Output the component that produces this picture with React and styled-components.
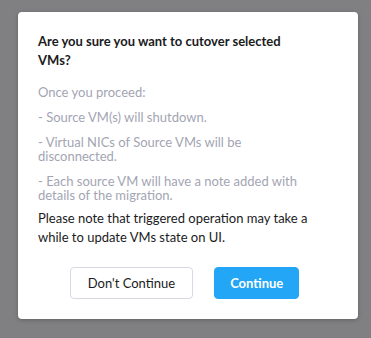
import React from "react";
import styled, { createGlobalStyle } from "styled-components";

const GlobalStyle = createGlobalStyle`
*{
  box-sizing: border-box;
  margin: 0;
  padding: 0;
}
body{
  background-color: #808083;
  font-family: Lato, "Open Sans", sans-serif;
}
`

const Overlay = styled.div`
width: 371px;
height: 338px;
padding: 12px 13px 0 18px;
`

const Modal = styled.section`
width: 340px;
background-color: #ffffff;
border-radius: 4px;
box-shadow: 0 1px 4px rgba(0, 0, 0, 0.25);
padding: 20px 20px 20px 20px;
`

const Title = styled.h2`
font-size: 13px;
font-weight: 700;
line-height: 19px;
color: #1b1b22;
`

const Notes = styled.div`
margin-top: 15px;
display: flex;
flex-direction: column;
gap: 11px;
`

const Note = styled.p`
font-size: 13px;
line-height: 14px;
color: #a3a5b3;
`

const Info = styled.p`
margin-top: 7px;
font-size: 13px;
line-height: 19px;
color: #1b1b22;
`

const Actions = styled.div`
margin-top: 20px;
display: flex;
justify-content: center;
gap: 21px;
padding-right: 7px;
`

const Button = styled.button`
height: 32px;
padding: ${p => (p.$primary ? "0 15px" : "0 17px")};
border-radius: 4px;
font-family: inherit;
font-size: 13px;
font-weight: ${p => (p.$primary ? 700 : 400)};
border: 1px solid ${p => (p.$primary ? "#22a6f5" : "#d6d9e3")};
background-color: ${p => (p.$primary ? "#22a6f5" : "#ffffff")};
color: ${p => (p.$primary ? "#ffffff" : "#1b1b22")};
`

export default function App(){
  return(
    <>
    <GlobalStyle/>
    <Overlay>
      <Modal>
        <Title>Are you sure you want to cutover selected<br/>VMs?</Title>
        <Notes>
          <Note>Once you proceed:</Note>
          <Note>- Source VM(s) will shutdown.</Note>
          <Note>- Virtual NICs of Source VMs will be<br/>disconnected.</Note>
          <Note>- Each source VM will have a note added with<br/>details of the migration.</Note>
        </Notes>
        <Info>Please note that triggered operation may take a<br/>while to update VMs state on UI.</Info>
        <Actions>
          <Button>Don't Continue</Button>
          <Button $primary>Continue</Button>
        </Actions>
      </Modal>
    </Overlay>
    </>
  )
}
